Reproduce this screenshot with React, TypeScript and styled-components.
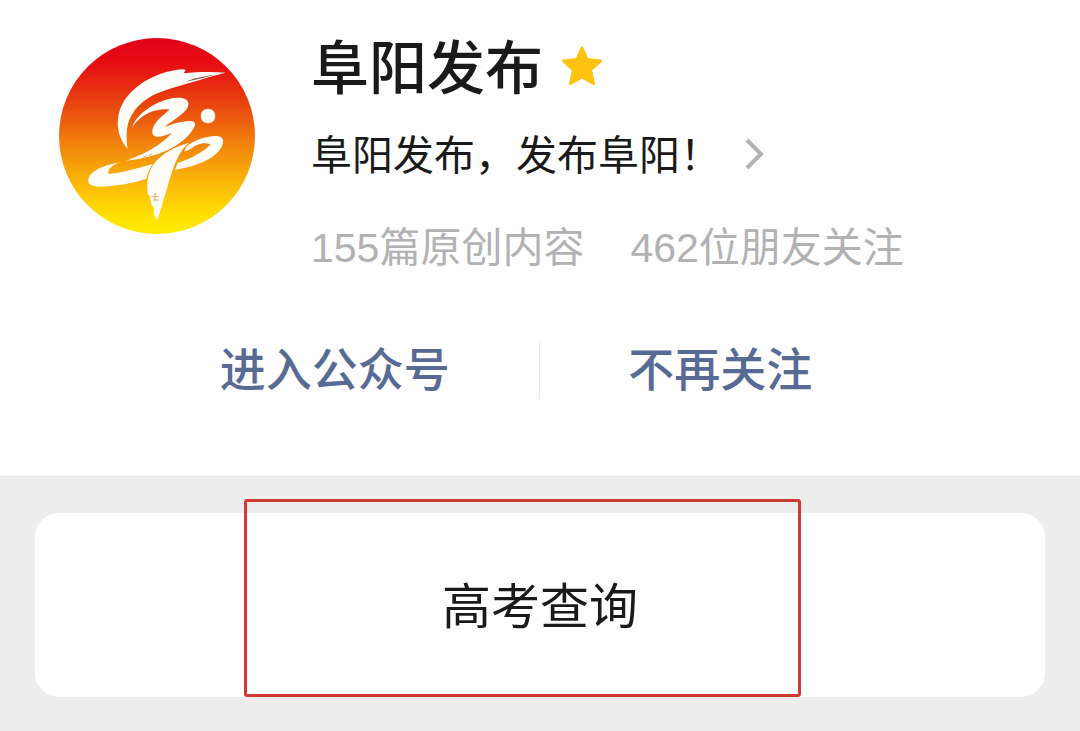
import React from "react";
import styled, { createGlobalStyle } from "styled-components";

const GlobalStyle = createGlobalStyle`
  *, *::before, *::after { box-sizing: border-box; }
  body {
    margin: 0;
    background: #ededed;
    font-family: "Noto Sans CJK SC", "Liberation Sans", sans-serif;
    color: #1a1a1a;
  }
  h1, p { margin: 0; }
`;

const Page = styled.main`
  display: flex;
  flex-direction: column;
  min-height: 100vh;
`;

const Profile = styled.section`
  background: #fefefe;
  border-bottom: 1px solid #e6e6e6;
`;

const Header = styled.header`
  display: flex;
  align-items: flex-start;
  gap: 56px;
  padding: 34px 59px 0;
`;

const Avatar = styled.svg`
  flex: none;
  width: 196px;
  height: 196px;
  margin-top: 4px;
`;

const Info = styled.div`
  flex: 1;
  min-width: 0;
`;

const TitleRow = styled.div`
  display: flex;
  align-items: center;
  gap: 18px;
  height: 60px;
`;

const Title = styled.h1`
  font-size: 58px;
  line-height: 60px;
  font-weight: 500;
`;

const Star = styled.svg`
  width: 42px;
  height: 42px;
  margin-top: 4px;
`;

const Description = styled.a`
  display: flex;
  align-items: center;
  gap: 24px;
  margin-top: 28px;
  font-size: 41px;
  line-height: 60px;
  color: inherit;
  text-decoration: none;
`;

const Chevron = styled.svg`
  width: 20px;
  height: 34px;
  margin-top: 4px;
`;

const Stats = styled.p`
  display: flex;
  gap: 46px;
  margin-top: 36px;
  font-family: "Liberation Sans", "Noto Sans CJK SC", sans-serif;
  font-size: 41px;
  line-height: 60px;
  color: #b2b2b2;
`;

const Actions = styled.div`
  display: grid;
  grid-template-columns: 41fr 1px 36fr;
  align-items: center;
  padding: 60px 180px 74px 130px;
`;

const Action = styled.button`
  border: 0;
  padding: 0 0 8px;
  background: none;
  font-family: inherit;
  font-size: 46px;
  line-height: 56px;
  font-weight: 500;
  color: #576b95;
  cursor: pointer;
`;

const Divider = styled.span`
  height: 58px;
  background: #ebebeb;
`;

const MenuArea = styled.section`
  padding: 36px 35px;
`;

const MenuCard = styled.div`
  position: relative;
  border-radius: 24px;
  background: #fefefe;
`;

const MenuItem = styled.button`
  display: block;
  width: 100%;
  padding: 60px 0 64px;
  border: 0;
  border-radius: 24px;
  background: none;
  font-family: inherit;
  font-size: 49px;
  line-height: 60px;
  color: #1a1a1a;
  cursor: pointer;
`;

const Highlight = styled.span`
  position: absolute;
  inset: -14px 244px 0 209px;
  border: 3px solid #cf3a32;
  border-radius: 3px;
  pointer-events: none;
`;

const Logo = () => (
  <Avatar viewBox="26 24 588 588" role="img" aria-label="阜阳发布">
    <defs>
      <linearGradient id="sunset" x1="0" y1="0" x2="0" y2="1">
        <stop offset="0" stopColor="#e3001b" />
        <stop offset="0.14" stopColor="#e60f12" />
        <stop offset="0.35" stopColor="#e9480f" />
        <stop offset="0.55" stopColor="#f2850c" />
        <stop offset="0.75" stopColor="#fabb08" />
        <stop offset="0.92" stopColor="#ffe303" />
        <stop offset="1" stopColor="#ffea00" />
      </linearGradient>
    </defs>
    <circle cx="320" cy="318" r="294" fill="url(#sunset)" />
    <g fill="#fffdf8">
      <path d="M232 357C210 330 199 300 203 266C207 224 232 190 268 164C308 136 354 121 397 118L406 120L400 130C440 126 484 125 526 128C488 137 450 149 414 160C384 169 352 177 323 189C286 204 254 231 238 267C227 292 227 325 232 357Z" />
      <path d="M244 293C258 260 284 238 316 222C344 208 376 200 398 205C417 210 419 226 407 240C391 259 362 274 342 292C365 281 397 273 422 273C436 274 437 283 430 295C415 321 388 342 357 358C318 378 272 387 228 393C254 381 282 371 304 357C329 342 350 326 364 309C348 314 331 323 317 320C304 316 303 303 310 289C320 269 342 254 358 238C339 238 316 239 295 249C273 259 258 275 244 293Z" />
      <circle cx="473" cy="258" r="22" />
      <path d="M211 396C187 404 172 416 174 431C206 432 253 416 307 402C296 418 290 433 288 446C247 460 193 469 148 470C121 470 109 460 115 444C122 424 153 407 211 396Z" />
      <path d="M408 349C431 331 465 319 495 318C519 318 523 333 514 350C497 382 450 407 374 419L382 399C423 386 461 365 481 343C461 334 435 343 421 357L402 365Z" />
      <path d="M416 338C396 354 381 382 370 411C358 444 350 477 339 511C333 532 328 553 320 571L311 553L310 529C304 532 302 517 299 500L293 493C289 468 290 438 303 414C320 381 358 355 416 338Z" />
    </g>
    <path d="M406 155C434 143 464 137 497 134C465 141 435 149 406 155Z" fill="#8b5148" />
    <g fill="none" stroke="#d8a979" strokeWidth="3">
      <path d="M310 492H319M303 500H326M308 510H325M314 491V512" />
      <path d="M278 382L289 377M294 377L304 372" />
    </g>
  </Avatar>
);

export default function App() {
  return (
    <>
      <GlobalStyle />
      <Page>
        <Profile>
          <Header>
            <Logo />
            <Info>
              <TitleRow>
                <Title>阜阳发布</Title>
                <Star viewBox="0 0 42 42" aria-hidden="true">
                  <path
                    d="M21 3L26 14.500L39.500 16L29.500 25L32.500 38.500L21 32L9.500 38.500L12.500 25L2.500 16L16 14.500Z"
                    fill="#ffc20f"
                    stroke="#ffc20f"
                    strokeWidth="3"
                    strokeLinejoin="round"
                  />
                </Star>
              </TitleRow>
              <Description href="#about">
                阜阳发布，发布阜阳！
                <Chevron viewBox="0 0 20 34" aria-hidden="true">
                  <path d="M2 3L16 17L2 31" fill="none" stroke="#b2b2b2" strokeWidth="4" />
                </Chevron>
              </Description>
              <Stats>
                <span>155篇原创内容</span>
                <span>462位朋友关注</span>
              </Stats>
            </Info>
          </Header>
          <Actions>
            <Action type="button">进入公众号</Action>
            <Divider />
            <Action type="button">不再关注</Action>
          </Actions>
        </Profile>
        <MenuArea>
          <MenuCard>
            <MenuItem type="button">高考查询</MenuItem>
            <Highlight />
          </MenuCard>
        </MenuArea>
      </Page>
    </>
  );
}
